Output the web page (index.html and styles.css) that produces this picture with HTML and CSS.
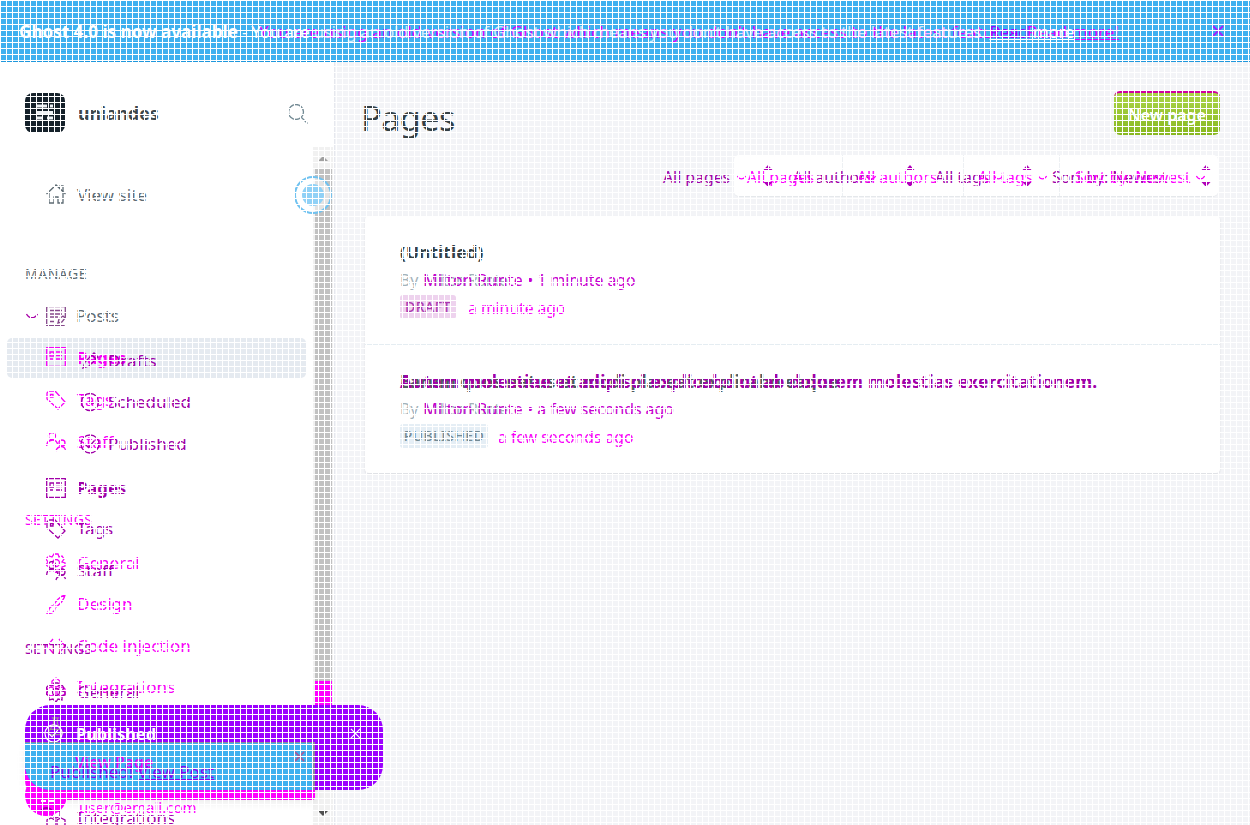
FILE: index.html
```
<!DOCTYPE html>
<html lang="en">
<head>
<meta charset="utf-8">
<title>Pages</title>
<link rel="stylesheet" href="styles.css">
</head>
<body>
<svg class="defs" width="0" height="0">
  <defs>
    <symbol id="page" viewBox="0 0 20 20"><path d="M.7.7h18.6v18.6H.7zM4 5h4v4H4zM10 5h6M10 8.500h6M4 12h3M10 12h6"/></symbol>
    <symbol id="posts" viewBox="0 0 20 20"><path d="M.7.7h18.6v11M.7.7v18.600h18M4 4.500h12M4 8h12M4 11h8M4 15.500h5M12 17l1-4 4-3 2 2-3 4z"/></symbol>
    <symbol id="tag" viewBox="0 0 20 20"><path d="M3 1h6l10 11-7 7L1 9V3zM4.500 4.500h2.500v2.500H4.500z"/></symbol>
    <symbol id="staff" viewBox="0 0 20 20"><circle cx="6" cy="4" r="3.500"/><circle cx="16" cy="11" r="3"/><path d="M.7 14c0-7 10-8 11-1M10 19c1-5 8-6 9.500-1"/></symbol>
    <symbol id="gear" viewBox="0 0 20 20"><circle cx="10" cy="10" r="3.500"/><path d="M8 1h4l1 3 3-1 2 3-2 3 3 1v3l-3 1 0 4-4-1-2 3-3-3-4 1 0-4-3-2 2-3-2-3 3-3 3 1z"/></symbol>
    <symbol id="brush" viewBox="0 0 20 20"><path d="M19 1C14 2 9 8 8 11l2 2c4-3 8-7 9-12zM7 12c-5 0-3 5-6 7 5 1 8-1 8-5"/></symbol>
    <symbol id="code" viewBox="0 0 20 20"><path d="M7 3L1 10l6 7M13 3l6 7-6 7"/></symbol>
    <symbol id="dots" viewBox="0 0 20 20"><path d="M10 1l4 3v4l-4 2-4-2V4zM5 10l4 2v5l-4 2-4-2v-5zM15 10l4 2v5l-4 2-4-2v-5z"/></symbol>
    <symbol id="labs" viewBox="0 0 20 20"><path d="M6 1h8M8 1v6L2 17c0 2 16 2 16 0L12 7V1M5 13h10"/></symbol>
    <symbol id="pencil" viewBox="0 0 20 20"><path d="M3 17l2-6L14 2l4 4-9 9zM12 4l4 4"/></symbol>
    <symbol id="clock" viewBox="0 0 20 20"><circle cx="10" cy="10" r="8.500"/><path d="M10 5v6h4"/></symbol>
    <symbol id="check" viewBox="0 0 20 20"><circle cx="10" cy="10" r="9"/><path d="M5.500 10.500l3 3 6-7"/></symbol>
    <symbol id="cross" viewBox="0 0 12 12"><path d="M1 1l10 10M11 1L1 11"/></symbol>
    <symbol id="chev" viewBox="0 0 12 7"><path d="M.5 1c3 5 8 5 11 0"/></symbol>
    <symbol id="sort" viewBox="0 0 10 22"><path class="solid" d="M5 0l4.500 5h-9zM5 22l4.500-5h-9z"/></symbol>
  </defs>
</svg>
<div class="app">
  <header class="banner">
    <p class="layer banner-b">You are using an old version of Ghost which means you don’t have access to the latest features. <u>Read more!</u></p>
    <p class="layer banner-a"><b>Ghost 4.0 is now available</b><span class="tail"> - You are <span class="faded">using an old version of Ghost which means you don’t have access to the latest features. </span><u><span class="violet">Read</span> more</u></span></p>
    <svg class="banner-close"><use href="#cross"/></svg>
  </header>
  <div class="columns">
    <aside class="sidebar">
      <div class="brand">
        <svg class="logo" viewBox="0 0 40 40"><path d="M12 13h10M25 13h3M12 19.500h16M12 25h6M22 25h6"/></svg>
        <strong>uniandes</strong>
        <svg class="search" viewBox="0 0 20 20"><circle cx="8" cy="8" r="7.500"/><path d="M13.500 13.500l6 6"/></svg>
      </div>
      <div class="view-site"><svg class="ico" viewBox="0 0 20 20"><path d="M.5 10L10 1l9.500 9M3 9v10h5v-6h4v6h5V9M14 4V2h3v5"/></svg><span>View site</span></div>
      <h4 class="heading">Manage</h4>
      <nav class="lists">
        <ul class="list list-b">
          <li></li>
          <li class="active"><svg class="ico"><use href="#page"/></svg><b>Pages</b></li>
          <li><svg class="ico"><use href="#tag"/></svg>Tags</li>
          <li><svg class="ico"><use href="#staff"/></svg>Staff</li>
          <li></li>
          <li class="heading">Settings</li>
          <li><svg class="ico"><use href="#gear"/></svg>General</li>
          <li><svg class="ico"><use href="#brush"/></svg>Design</li>
          <li><svg class="ico"><use href="#code"/></svg>Code injection</li>
          <li><svg class="ico"><use href="#dots"/></svg>Integrations</li>
        </ul>
        <ul class="list list-a">
          <li class="posts"><svg class="ico-chev"><use href="#chev"/></svg><svg class="ico"><use href="#posts"/></svg>Posts</li>
          <li class="sub"><svg class="ico"><use href="#pencil"/></svg>Drafts</li>
          <li class="sub"><svg class="ico"><use href="#clock"/></svg>Scheduled</li>
          <li class="sub"><svg class="ico"><use href="#check"/></svg>Published</li>
          <li><svg class="ico"><use href="#page"/></svg><b>Pages</b></li>
          <li><svg class="ico"><use href="#tag"/></svg>Tags</li>
          <li><svg class="ico"><use href="#staff"/></svg>Staff</li>
          <li></li>
          <li class="heading">Settings</li>
          <li><svg class="ico"><use href="#gear"/></svg>General</li>
          <li></li>
          <li></li>
          <li><svg class="ico"><use href="#dots"/></svg>Integrations</li>
        </ul>
      </nav>
      <div class="scrollbar"><svg viewBox="0 0 10 5"><path d="M0 5l5-5 5 5z"/></svg><i class="thumb"></i><i class="thumb-end"></i><svg class="down" viewBox="0 0 10 5"><path d="M0 0h10L5 5z"/></svg></div>
      <i class="beacon"></i>
    </aside>
    <main class="main">
      <div class="title-row"><h1>Pages</h1><button class="new-page">New page</button></div>
      <div class="filters">
        <div class="filter-box"><i></i><i></i><i></i><i></i></div>
        <div class="filter-text filter-a"><span>All pages</span><span>All authors</span><span>All tags</span><span>Sort by: Newest</span></div>
        <div class="filter-text filter-b"><span>All pages</span><span>All authors</span><span>All tags</span><span>Sort by: Newest</span></div>
        <div class="filter-icons chevs"><svg><use href="#chev"/></svg><svg><use href="#chev"/></svg><svg><use href="#chev"/></svg><svg><use href="#chev"/></svg><svg><use href="#chev"/></svg></div>
        <div class="filter-icons sorts"><svg><use href="#sort"/></svg><svg><use href="#sort"/></svg><svg><use href="#sort"/></svg><svg><use href="#sort"/></svg></div>
      </div>
      <section class="card">
        <article class="entry">
          <h3>(Untitled)</h3>
          <div class="meta"><span class="by">By</span><div class="stack"><span class="ghost-name">Milton Runte</span><span class="by-text"><span class="name">Milton Runte</span> • 1 minute ago</span></div></div>
          <div class="status"><span class="badge draft">Draft</span><span>a minute ago</span></div>
        </article>
        <article class="entry">
          <h3 class="stack"><span class="title-b">Earum quos natus et modi placeat explicabo eaque</span><span class="title-a">Autem molestiae et adipisci explicabo ut ab dolorem molestias exercitationem.</span></h3>
          <div class="meta"><span class="by">By</span><div class="stack"><span class="ghost-name">Milton Runte</span><span class="by-text"><span class="name">Milton Runte</span> • a few seconds ago</span></div></div>
          <div class="status"><span class="badge published">Published</span><span>a few seconds ago</span></div>
        </article>
      </section>
    </main>
  </div>
  <div class="user-panel"><svg class="avatar" viewBox="0 0 42 42"><path d="M16 27h5M24 27h5"/><path class="dim" d="M16 37c2-4 9-4 11 0"/></svg><i class="base"></i><span>user@email.com</span></div>
  <div class="toast">
    <div class="toast-head"><svg class="under"><use href="#labs"/></svg><svg class="mark"><use href="#check"/></svg><div class="stack"><span class="labs">Labs</span><b>Published</b></div><svg class="x"><use href="#cross"/></svg></div>
    <div class="toast-blue"><svg class="x"><use href="#cross"/></svg><b class="view-page">View Page</b><span class="published-link">Published! <u>View Post</u></span></div>
  </div>
  <div class="mesh"></div>
</div>
</body>
</html>
```
FILE: styles.css
```
* { box-sizing: border-box; margin: 0; padding: 0; }
body { width: 1250px; height: 825px; overflow: hidden; font: 17px/24px "Noto Sans", "Open Sans", sans-serif; color: #5d6b73; background: #f3f4f7; }
svg { fill: none; stroke: currentColor; stroke-width: 1.3; flex: none; }
.solid { fill: currentColor; stroke: none; }
.defs { position: absolute; }
ul { list-style: none; }
.app { position: relative; height: 825px; overflow: hidden; }
.stack { display: grid; justify-items: start; }
.stack > * { grid-area: 1 / 1; white-space: nowrap; }

.banner { display: grid; height: 62px; align-items: center; background: #3eb0ef; border-bottom: 1px solid #1f98dd; color: #fff; }
.banner > * { grid-area: 1 / 1; }
.layer { white-space: nowrap; font-size: 17.100px; padding-top: 2px; }
.banner-a { padding-left: 19px; }
.tail { letter-spacing: -.31px; }
.faded { color: rgba(255,255,255,.75); }
.violet { color: #9b00ff; }
.banner-b { padding-left: 259px; color: #e000ff; }
.banner-close { width: 12px; height: 12px; justify-self: end; margin-right: 26px; color: #a020ff; stroke-width: 1.800; }

.columns { display: grid; grid-template-columns: 335px 1fr; height: 763px; }
.sidebar { position: relative; background: #fff; border-right: 1px solid #e6e8ee; overflow: hidden; }
.brand { display: flex; align-items: center; height: 40px; margin: 31px 26px 0 25px; }
.brand strong { flex: 1; margin-left: 13px; font-weight: 700; font-size: 17.600px; color: #3c474c; }
.logo { width: 40px; height: 40px; border-radius: 8px; background: #15212a; color: #eef2f5; stroke-width: 3; }
.search { width: 20px; height: 20px; color: #738a94; margin-top: 2px; }
.view-site { display: flex; align-items: center; gap: 11px; height: 40px; margin: 42px 0 0 46px; }
.ico { width: 20px; height: 20px; }
.view-site .ico { margin-top: -2px; }
.heading { font-size: 14px; font-weight: 400; text-transform: uppercase; letter-spacing: .35px; }
h4.heading { height: 24px; margin: 47px 0 9px 25px; letter-spacing: .5px; }
.lists { display: grid; }
.list { grid-area: 1 / 1; display: grid; align-content: start; height: 531px; overflow: hidden; }
.list li { display: flex; align-items: center; padding-left: 46px; min-height: 0; gap: 11px; }
.list li.heading { padding-left: 25px; }
.list-a { grid-template-rows: 42px 47px 36px 47px 42px 40px 43px 40px 34px 52px 36px 36px 56px; color: #a000a8; }
.list-b { grid-template-rows: 42px 42px 41px 43px 40px 34px 51px 31px 53px 30px; color: #f800f8; }
.list-a li.posts { padding-left: 26px; gap: 8px; color: #5d6b73; }
.posts .ico { color: #86498b; margin-right: 2px; }
.ico-chev { width: 12px; height: 7px; color: #a800a8; }
.list-a li.sub { padding-left: 80px; gap: 8px; }
.list .active { margin: 1px 28px 1px 7px; padding-left: 39px; background: #e5eaf0; border-radius: 5px; }
.active .ico { margin-top: -3px; }
.list b { font-size: 16.700px; }
.scrollbar { position: absolute; left: 313px; top: 85px; width: 20px; height: 678px; display: flex; flex-direction: column; align-items: center; background: #f1f1f1; }
.scrollbar svg { width: 10px; height: 5px; margin: 9px 0 7px; fill: #a0a0a0; stroke: none; }
.scrollbar .down { margin: auto 0 9px; fill: #505050; }
.thumb { width: 17px; height: 513px; background: #c1c1c1; }
.thumb-end { width: 17px; height: 25px; background: #f0f; }
.beacon { position: absolute; left: 294px; top: 114px; width: 38px; height: 38px; border-radius: 50%; border: 2px solid #70c2f0; background: radial-gradient(circle, #90d1f6 0 10.500px, rgba(255,255,255,.55) 11.500px); }

.title-row { display: flex; justify-content: space-between; align-items: center; height: 44px; margin: 29px 30px 0 26px; }
h1 { font-size: 34.300px; line-height: 44px; font-weight: 400; letter-spacing: -.6px; color: #343f44; padding-top: 9px; }
.new-page { width: 106px; height: 44px; border: 0; border-top: 2px solid #d000a0; border-radius: 6px; background: linear-gradient(#acd548, #88b820); color: #fff; font: 600 16px "Noto Sans", sans-serif; padding-top: 2px; }
.filters { display: grid; height: 42px; margin-top: 20px; font-size: 15.800px; }
.filters > * { grid-area: 1 / 1; }
.filter-box { display: grid; grid-template-columns: 108px 121px 96px 159px; margin-left: 399px; width: 484px; background: #fff; border-radius: 5px; border-bottom: 1px solid #e5e8eb; }
.filter-box i + i { border-left: 1px solid #edf0f3; }
.filter-text { display: grid; align-items: center; white-space: nowrap; padding-top: 2px; }
.filter-a { grid-template-columns: 130px 142px 117px 170px; margin-left: 328px; color: #a000a8; }
.filter-b { grid-template-columns: 110px 121px 97px 170px; margin-left: 412px; color: #f0f; }
.filter-icons { display: grid; align-items: center; color: #f0f; }
.chevs { grid-template-columns: 130px 127px 44px 158px 20px; margin-left: 402px; padding-top: 3px; }
.chevs svg { width: 9px; height: 6px; stroke-width: 1.700; }
.sorts { grid-template-columns: 142px 117px 179px 20px; margin-left: 428px; color: #b000b8; }
.sorts svg { width: 10px; height: 22px; }

.card { margin: 19px 30px 0 30px; height: 257px; background: #fff; border-radius: 4px; box-shadow: 0 1px 2px rgba(30,40,60,.12); }
.entry { height: 128px; padding: 25px 35px 0; font-size: 15.800px; }
.entry + .entry { border-top: 1px solid #e5edf2; }
h3 { font-size: 17.300px; line-height: 24px; font-weight: 700; color: #343f44; }
.entry > h3:not(.stack) { letter-spacing: .1px; }
.title-a { color: #a000a8; letter-spacing: .22px; }
.title-b { color: #505b60; }
.meta { display: flex; gap: 5px; margin-top: 3px; color: #a3b2ba; }
.by-text { color: #c800d0; }
.name { letter-spacing: .35px; }
.ghost-name { letter-spacing: -1px; }
.status { display: flex; align-items: center; gap: 12px; margin-top: 3px; color: #f800f8; font-size: 15.700px; }
.status > span:last-child { padding-top: 1px; }
.badge { height: 24px; line-height: 23px; margin-top: -2px; border-radius: 3px; font-size: 14px; font-weight: 500; text-transform: uppercase; text-align: center; }
.draft { width: 56px; background: #eed3ee; color: #ac3bb0; letter-spacing: .5px; }
.published { width: 88px; background: #e5eef5; color: #738a94; letter-spacing: .4px; }
.status:has(.published) { gap: 10px; }

.user-panel { position: absolute; left: 25px; top: 742px; width: 290px; height: 83px; color: #f0f; font-size: 15px; }
.user-panel .base { display: block; height: 58px; background: #f0f; border-radius: 3px 3px 3px 20px; box-shadow: 0 3px 10px rgba(0,0,0,.08); }
.user-panel .avatar { position: absolute; z-index: 1; left: 0; top: 32px; width: 42px; height: 42px; border-radius: 50%; background: #f0f; color: #fff; stroke-width: 2; }
.dim { stroke: #a000a8; }
.user-panel span { position: absolute; left: 54px; top: 53px; }
.toast { position: absolute; z-index: 2; left: 25px; top: 705px; width: 358px; height: 85px; border-radius: 25px; background: #9b00ff; overflow: hidden; color: #fff; }
.toast-head { display: flex; align-items: center; height: 37px; padding: 20px 22px 0 19px; }
.toast-head .under, .toast-head .mark { width: 19px; height: 19px; }
.toast-head .under { color: #9b8b9b; margin: -14px -21px 0 2px; }
.toast-head .mark { margin-right: 13px; }
.toast-head .labs { color: #f000f0; }
.toast-head b { font-size: 16.400px; }
.x { width: 11px; height: 11px; margin-left: auto; }
.toast-blue { position: relative; display: grid; width: 290px; height: 48px; background: #3eb0ef; border: solid #8b8b9b; border-width: 1px 2px 0 0; }
.toast-blue > * { grid-area: 1 / 1; }
.toast-blue .x { justify-self: end; margin: 8px 8px 0 0; color: #a45b9b; stroke-width: 2; }
.view-page { padding: 7px 0 0 50px; color: #e800f8; font-weight: 500; font-size: 16px; }
.published-link { padding: 17px 0 0 25px; color: #8b00f0; font-size: 17px; }
.mesh { position: absolute; z-index: 3; inset: 0; pointer-events: none; background: repeating-linear-gradient(90deg, #fff 0 1px, transparent 1px 6px), repeating-linear-gradient(#fff 0 1px, transparent 1px 6px); }
```
